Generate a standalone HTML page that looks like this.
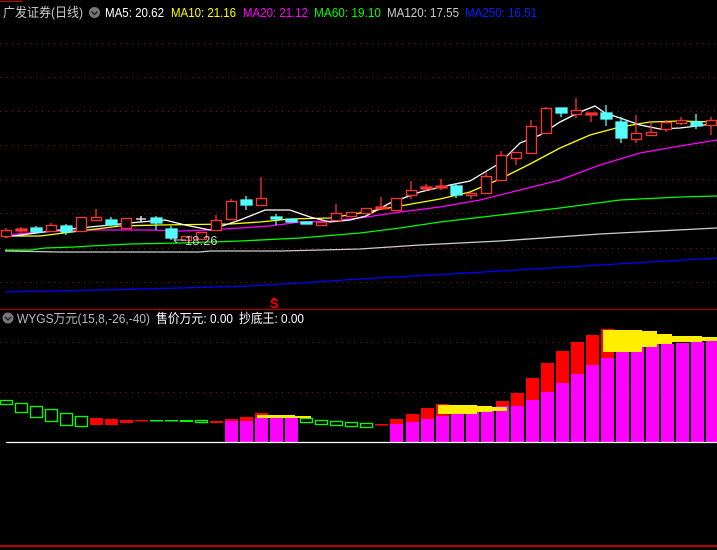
<!DOCTYPE html>
<html><head><meta charset="utf-8"><style>
html,body{margin:0;padding:0;background:#000;width:717px;height:550px;overflow:hidden}
svg{display:block}
text{font-family:"Liberation Sans","Noto Sans CJK SC",sans-serif;font-size:13px}
</style></head><body>
<svg width="717" height="550" viewBox="0 0 717 550" xmlns="http://www.w3.org/2000/svg">
<rect width="717" height="550" fill="#000"/>
<path d="M0 1.5H22V0" stroke="#c00" fill="none"/>
<g stroke="#8a1010" stroke-dasharray="1,5" stroke-width="1">
<line x1="0" y1="43.5" x2="717" y2="43.5"/><line x1="0" y1="77.5" x2="717" y2="77.5"/>
<line x1="0" y1="111.5" x2="717" y2="111.5"/><line x1="0" y1="145.5" x2="717" y2="145.5"/>
<line x1="0" y1="179.5" x2="717" y2="179.5"/><line x1="0" y1="213.5" x2="717" y2="213.5"/>
<line x1="0" y1="248.5" x2="717" y2="248.5"/><line x1="0" y1="282.5" x2="717" y2="282.5"/>
<line x1="0" y1="342.5" x2="717" y2="342.5"/><line x1="0" y1="392.5" x2="717" y2="392.5"/>
</g>
<line x1="0" y1="309.5" x2="717" y2="309.5" stroke="#a00" stroke-width="1.2"/>
<line x1="0" y1="546" x2="717" y2="546" stroke="#b00" stroke-width="2"/>
<text x="3" y="17" fill="#ccc" textLength="80" lengthAdjust="spacingAndGlyphs">广发证券(日线)</text>
<circle cx="94.5" cy="12.5" r="5.5" fill="#777"/><path d="M91.5 11.5l3 3 3-3" stroke="#222" stroke-width="1.5" fill="none"/>
<text x="105" y="17" fill="#fff" textLength="59" lengthAdjust="spacingAndGlyphs">MA5: 20.62</text>
<text x="171" y="17" fill="#ff0" textLength="65" lengthAdjust="spacingAndGlyphs">MA10: 21.16</text>
<text x="243" y="17" fill="#f0f" textLength="65" lengthAdjust="spacingAndGlyphs">MA20: 21.12</text>
<text x="314" y="17" fill="#0f0" textLength="67" lengthAdjust="spacingAndGlyphs">MA60: 19.10</text>
<text x="387" y="17" fill="#ccc" textLength="72" lengthAdjust="spacingAndGlyphs">MA120: 17.55</text>
<text x="465" y="17" fill="#0022ff" textLength="72" lengthAdjust="spacingAndGlyphs">MA250: 16.51</text>
<g fill="none" stroke-width="1.3">
<polyline stroke="#00f" points="5,292 100,290 180,288 250,286 300,283 360,279 450,274 550,268 650,262 717,258"/>
<polyline stroke="#ccc" points="5,251 60,252 200,252 210,251 280,251 320,250 360,249 420,245 500,241 600,234 717,228"/>
<polyline stroke="#0f0" points="5,250 30,250 45,248 75,247 90,246 130,244 180,243 240,241 300,238 360,233 400,228 440,222 500,215 560,208 620,200 680,197 717,196"/>
<polyline stroke="#f0f" points="5,235 40,232 80,230 150,230 180,231 210,230 240,228 270,226 300,222 330,221 360,218 400,212 440,207 480,200 520,190 560,180 600,165 640,153 680,146 717,140"/>
<polyline stroke="#ff0" points="5,236 40,236 80,231 120,226 160,225 230,224 260,222 290,219 330,218 360,213 400,206 440,199 470,192 500,179 530,164 560,148 590,135 620,127 650,122 680,121 717,122"/>
<polyline stroke="#fff" points="5,237 60,230 100,226 140,222 165,220 185,225 210,230 240,220 265,210 290,210 310,217 330,222 350,220 366,216 390,203 420,192 450,185 470,181 480,175 500,163 520,143 540,135 560,122 580,112 595,106 605,113 620,118 640,125 660,129 680,128 697,126 717,123"/>
</g>
<g stroke="#ff3232" stroke-width="1.3" fill="#000">
<line x1="6" y1="228" x2="6" y2="236"/><rect x="1.5" y="230.5" width="10" height="6"/>
<line x1="21" y1="227" x2="21" y2="233"/><rect x="16" y="229" width="11" height="2" fill="#ff3232"/>
<line x1="51" y1="223" x2="51" y2="231"/><rect x="46.5" y="225.5" width="10" height="6"/>
<rect x="76.5" y="217.5" width="10" height="14"/>
<line x1="96" y1="209" x2="96" y2="220"/><rect x="91.5" y="217.5" width="10" height="3"/>
<rect x="121.5" y="218.5" width="10" height="10"/>
<rect x="181.5" y="236.5" width="10" height="4"/>
<rect x="196.5" y="232.5" width="10" height="7"/>
<line x1="216" y1="215" x2="216" y2="230"/><rect x="211.5" y="220.5" width="10" height="10"/>
<line x1="231" y1="199" x2="231" y2="219"/><rect x="226.5" y="201.5" width="10" height="18"/>
<line x1="261" y1="177" x2="261" y2="205"/><rect x="256.5" y="198.5" width="10" height="7"/>
<rect x="316.5" y="222.5" width="10" height="3"/>
<line x1="336" y1="204" x2="336" y2="220"/><rect x="331.5" y="213.5" width="10" height="7"/>
<rect x="346.5" y="212.5" width="10" height="4"/>
<rect x="361.5" y="208.5" width="10" height="5"/>
<line x1="381" y1="197" x2="381" y2="209"/><rect x="376" y="207" width="11" height="2" fill="#ff3232"/>
<rect x="391.5" y="198.5" width="10" height="12"/>
<line x1="411" y1="181" x2="411" y2="199"/><rect x="406.5" y="190.5" width="10" height="5"/>
<line x1="426" y1="184" x2="426" y2="191"/><rect x="421" y="187" width="11" height="2" fill="#ff3232"/>
<line x1="441" y1="179" x2="441" y2="190"/><rect x="436" y="186" width="11" height="2" fill="#ff3232"/>
<line x1="471" y1="193" x2="471" y2="199"/><rect x="466.5" y="193.5" width="10" height="2"/>
<line x1="486" y1="172" x2="486" y2="193"/><rect x="481.5" y="176.5" width="10" height="17"/>
<line x1="501" y1="151" x2="501" y2="180"/><rect x="496.5" y="155.5" width="10" height="25"/>
<line x1="516" y1="152" x2="516" y2="165"/><rect x="511.5" y="152.5" width="10" height="6"/>
<line x1="531" y1="120" x2="531" y2="153"/><rect x="526.5" y="126.5" width="10" height="27"/>
<line x1="546" y1="107" x2="546" y2="133"/><rect x="541.5" y="108.5" width="10" height="25"/>
<line x1="576" y1="98" x2="576" y2="118"/><rect x="571.5" y="110.5" width="10" height="4"/>
<line x1="591" y1="113" x2="591" y2="122"/><rect x="586" y="113" width="11" height="2" fill="#ff3232"/>
<line x1="636" y1="115" x2="636" y2="143"/><rect x="631.5" y="133.5" width="10" height="6"/>
<line x1="651" y1="123" x2="651" y2="135"/><rect x="646.5" y="132.5" width="10" height="3"/>
<line x1="666" y1="120" x2="666" y2="132"/><rect x="661.5" y="122.5" width="10" height="7"/>
<line x1="681" y1="117" x2="681" y2="125"/><rect x="676.5" y="120.5" width="10" height="3"/>
<line x1="711" y1="117" x2="711" y2="135"/><rect x="706.5" y="120.5" width="10" height="5"/>
</g>
<g stroke="#54fcfc" stroke-width="1.3" fill="#54fcfc">
<line x1="36" y1="226" x2="36" y2="233"/><rect x="31" y="228" width="11" height="4"/>
<line x1="66" y1="224" x2="66" y2="235"/><rect x="61" y="226" width="11" height="6"/>
<line x1="111" y1="217" x2="111" y2="226"/><rect x="106" y="220" width="11" height="5"/>
<line x1="156" y1="216" x2="156" y2="230"/><rect x="151" y="218" width="11" height="5"/>
<line x1="171" y1="226" x2="171" y2="240"/><rect x="166" y="229" width="11" height="9"/>
<line x1="246" y1="196" x2="246" y2="210"/><rect x="241" y="200" width="11" height="5"/>
<line x1="276" y1="214" x2="276" y2="225"/><rect x="271" y="217" width="11" height="2"/>
<rect x="286" y="219" width="11" height="3"/>
<rect x="301" y="222" width="11" height="2"/>
<line x1="456" y1="183" x2="456" y2="198"/><rect x="451" y="186" width="11" height="9"/>
<line x1="561" y1="108" x2="561" y2="117"/><rect x="556" y="108" width="11" height="5"/>
<line x1="606" y1="105" x2="606" y2="126"/><rect x="601" y="113" width="11" height="6"/>
<line x1="621" y1="117" x2="621" y2="143"/><rect x="616" y="122" width="11" height="16"/>
<line x1="696" y1="114" x2="696" y2="129"/><rect x="691" y="122" width="11" height="4"/>
</g>
<path d="M141 216v6M136 219h10" stroke="#fff" stroke-width="1.3"/>
<path d="M186 240H174M177 237l-3 3 3 3" stroke="#ccc" fill="none"/>
<text x="185" y="245" fill="#ccc" font-size="12">18.26</text>
<path d="M274 297l-3 3h6z" fill="#f00"/>
<text x="270" y="308" fill="#f00" font-size="10" font-weight="bold">S</text>
<circle cx="8" cy="318" r="5.5" fill="#777"/><path d="M5 317l3 3 3-3" stroke="#222" stroke-width="1.5" fill="none"/>
<text x="17" y="323" fill="#bbb" textLength="133" lengthAdjust="spacingAndGlyphs">WYGS万元(15,8,-26,-40)</text>
<text x="156" y="323" fill="#fff" textLength="77" lengthAdjust="spacingAndGlyphs">售价万元: 0.00</text>
<text x="239" y="323" fill="#fff" textLength="65" lengthAdjust="spacingAndGlyphs">抄底王: 0.00</text>
<g fill="none" stroke="#0f0" stroke-width="1.3">
<rect x="0.5" y="400.5" width="12" height="4"/>
<rect x="15.5" y="403.5" width="12" height="9"/>
<rect x="30.5" y="406.5" width="12" height="11"/>
<rect x="45.5" y="409.5" width="12" height="12"/>
<rect x="60.5" y="413.5" width="12" height="12"/>
<rect x="75.5" y="416.5" width="12" height="10"/>
<rect x="195.5" y="420.5" width="12" height="2"/>
<rect x="300.5" y="418.5" width="12" height="4"/>
<rect x="315.5" y="420.5" width="12" height="4"/>
<rect x="330.5" y="421.5" width="12" height="4"/>
<rect x="345.5" y="422.5" width="12" height="4"/>
<rect x="360.5" y="423.5" width="12" height="4"/>
</g>
<g fill="#0f0">
<rect x="150" y="420" width="13" height="1.5"/><rect x="165" y="420" width="13" height="1.5"/><rect x="180" y="420" width="13" height="2"/>
</g>
<g fill="#f00">
<rect x="90" y="418" width="13" height="7"/><rect x="105" y="419" width="13" height="6"/>
<rect x="120" y="420" width="13" height="3"/><rect x="135" y="420" width="13" height="1.5"/>
<rect x="210" y="421" width="13" height="2"/><rect x="375" y="424" width="13" height="1.5"/>
<rect x="225" y="419" width="13" height="3"/><rect x="240" y="417" width="13" height="5"/><rect x="255" y="413" width="13" height="6"/>
<rect x="390" y="419" width="13" height="6"/><rect x="406" y="414" width="13" height="9"/>
<rect x="421" y="408" width="13" height="12"/><rect x="436" y="404" width="13" height="13"/>
<rect x="496" y="401" width="13" height="6"/><rect x="511" y="393" width="13" height="14"/>
<rect x="526" y="378" width="13" height="23"/><rect x="541" y="363" width="13" height="30"/>
<rect x="556" y="351" width="13" height="33"/><rect x="571" y="342" width="13" height="33"/>
<rect x="586" y="335" width="13" height="31"/><rect x="601" y="329" width="13" height="30"/>
</g>
<g fill="#f0f">
<rect x="225" y="421" width="13" height="21"/><rect x="240" y="421" width="13" height="21"/>
<rect x="255" y="418" width="13" height="24"/><rect x="270" y="418" width="13" height="24"/><rect x="285" y="418" width="13" height="24"/>
<rect x="390" y="424" width="13" height="18"/><rect x="406" y="422" width="13" height="20"/>
<rect x="421" y="419" width="13" height="23"/><rect x="436" y="416" width="13" height="26"/>
<rect x="451" y="412" width="13" height="30"/><rect x="466" y="411" width="13" height="31"/>
<rect x="481" y="409" width="13" height="33"/><rect x="496" y="406" width="13" height="36"/>
<rect x="511" y="406" width="13" height="36"/><rect x="526" y="400" width="13" height="42"/>
<rect x="541" y="392" width="13" height="50"/><rect x="556" y="383" width="13" height="59"/>
<rect x="571" y="374" width="13" height="68"/><rect x="586" y="365" width="13" height="77"/>
<rect x="601" y="358" width="13" height="84"/><rect x="616" y="352" width="13" height="90"/>
<rect x="631" y="347" width="13" height="95"/><rect x="646" y="344" width="13" height="98"/>
<rect x="661" y="344" width="13" height="98"/><rect x="676" y="343" width="13" height="99"/>
<rect x="691" y="342" width="13" height="100"/><rect x="706" y="341" width="11" height="101"/>
</g>
<g fill="#ffee00">
<rect x="257" y="415" width="38" height="3"/><rect x="295" y="416" width="16" height="2"/>
<rect x="438" y="405" width="39" height="9"/><rect x="477" y="406" width="15" height="6"/><rect x="492" y="407" width="15" height="4"/>
<rect x="603" y="330" width="39" height="22"/><rect x="642" y="331" width="15" height="16"/><rect x="657" y="334" width="15" height="10"/>
<rect x="672" y="336" width="30" height="6"/><rect x="702" y="337" width="15" height="4"/>
</g>
<line x1="6" y1="442.5" x2="717" y2="442.5" stroke="#fff" stroke-width="1.3"/>
</svg>
</body></html>
